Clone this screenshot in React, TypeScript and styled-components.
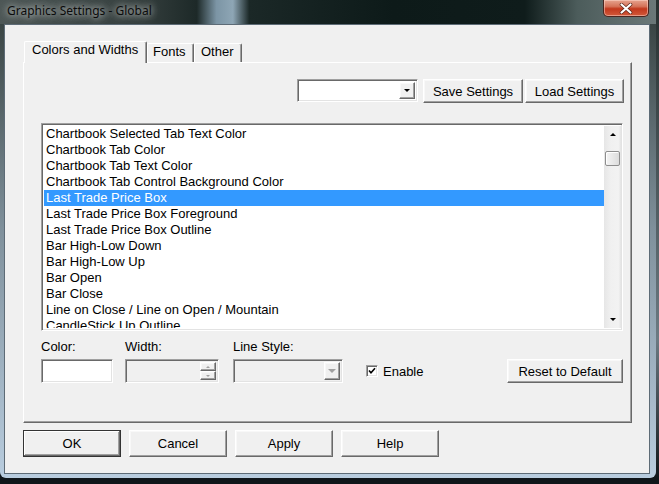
import * as React from 'react';
import { useState } from 'react';
import styled, { createGlobalStyle, css } from 'styled-components';

const GlobalStyle = createGlobalStyle`
  * {
    box-sizing: border-box;
  }
  html,
  body {
    margin: 0;
    padding: 0;
  }
  body {
    width: 659px;
    height: 484px;
    overflow: hidden;
    background: linear-gradient(180deg, #27302f 0%, #6c7a82 70%, #10161a 99%);
    font-family: 'Liberation Sans', Arial, sans-serif;
    font-size: 13px;
    color: #000;
  }
`;

const raised = css`
  border: 1px solid;
  border-color: #fff #696969 #696969 #fff;
  box-shadow: inset -1px -1px 0 #a0a0a0, inset 1px 1px 0 #f8f8f8;
`;

const sunken = css`
  border: 1px solid;
  border-color: #a0a0a0 #fff #fff #a0a0a0;
  box-shadow: inset 1px 1px 0 #696969, inset -1px -1px 0 #e3e3e3;
`;

const Window = styled.div`
  width: 656px;
  height: 478px;
  display: flex;
  flex-direction: column;
`;

const TitleBar = styled.div`
  height: 24px;
  display: flex;
  align-items: flex-start;
  padding-left: 7px;
  background: linear-gradient(
    90deg,
    #4d5756 0%,
    #333d3c 22%,
    #1d2928 30%,
    #7c95a5 33%,
    #8ea6b5 35.5%,
    #1b2827 38%,
    #0d1a19 60%,
    #0f1c1b 80%,
    #4c5c5b 88%,
    #6b7878 100%
  );
`;

const Title = styled.span`
  margin-top: 2px;
  font-family: 'Noto Sans', 'Open Sans', sans-serif;
  font-size: 12px;
  color: #0b0b0b;
  text-shadow: 0 0 6px rgba(225, 230, 230, 0.95), 0 0 12px rgba(205, 210, 210, 0.8);
`;

const CloseButton = styled.div`
  margin-left: auto;
  margin-right: 7px;
  width: 46px;
  height: 17px;
  display: flex;
  align-items: center;
  justify-content: center;
  border: 1px solid #4a2620;
  border-top: none;
  border-radius: 0 0 5px 5px;
  background: linear-gradient(180deg, #e6a38f 0%, #d5735a 40%, #c2381d 55%, #d2593a 100%);
  box-shadow: inset 0 0 0 1px rgba(255, 220, 210, 0.5);
`;

const FrameBody = styled.div`
  flex: 1;
  display: flex;
  padding: 0 6px 4px 4px;
  border-radius: 0 0 6px 6px;
  background: linear-gradient(180deg, #3a4544 0%, #7f909b 45%, #b9cddf 100%);
`;

const Client = styled.div`
  flex: 1;
  display: flex;
  flex-direction: column;
  background: #f0f0f0;
  border: 1px solid #5d6b76;
  padding: 16px 0 0 18px;
`;

const TabStrip = styled.div`
  height: 21px;
  display: flex;
  align-items: flex-end;
  padding-left: 1px;
`;

const Tab = styled.div<{ $active?: boolean; $w: number; $pl: number }>`
  position: relative;
  width: ${(p) => p.$w}px;
  height: ${(p) => (p.$active ? 22 : 19)}px;
  margin-bottom: ${(p) => (p.$active ? -1 : 0)}px;
  z-index: ${(p) => (p.$active ? 2 : 0)};
  padding-left: ${(p) => p.$pl}px;
  line-height: 16px;
  background: #f0f0f0;
  border: 1px solid;
  border-bottom: none;
  border-color: #fff #696969 #696969 #fff;
  border-radius: 2px 2px 0 0;
  box-shadow: inset -1px 0 0 #a0a0a0;
  white-space: nowrap;
`;

const Panel = styled.div`
  position: relative;
  z-index: 1;
  width: 609px;
  height: 361px;
  display: flex;
  flex-direction: column;
  border: 1px solid;
  border-color: #fff #696969 #696969 #fff;
  box-shadow: inset -1px -1px 0 #a0a0a0;
`;

const TopRow = styled.div`
  display: flex;
  justify-content: flex-end;
  align-items: flex-start;
  gap: 2px;
  margin-top: 16px;
  padding-right: 7px;
`;

const Combo = styled.div<{ $w: number; $disabled?: boolean }>`
  ${sunken};
  width: ${(p) => p.$w}px;
  height: ${(p) => (p.$disabled ? 24 : 23)}px;
  display: flex;
  justify-content: flex-end;
  padding: 2px;
  background: ${(p) => (p.$disabled ? '#f0f0f0' : '#fff')};
`;

const DropButton = styled.div`
  ${raised};
  width: 16px;
  height: 100%;
  display: flex;
  align-items: center;
  justify-content: center;
  background: #f0f0f0;
`;

const Arrow = styled.span<{ $up?: boolean; $color?: string; $size?: number }>`
  width: 0;
  height: 0;
  border-left: ${(p) => p.$size ?? 4}px solid transparent;
  border-right: ${(p) => p.$size ?? 4}px solid transparent;
  ${(p) =>
    p.$up
      ? `border-bottom: ${p.$size ?? 4}px solid ${p.$color ?? '#000'};`
      : `border-top: ${p.$size ?? 4}px solid ${p.$color ?? '#000'};`}
`;

const Button = styled.button<{ $w: number; $h?: number; $default?: boolean }>`
  ${raised};
  width: ${(p) => p.$w}px;
  height: ${(p) => p.$h ?? 24}px;
  padding: 0;
  background: #f0f0f0;
  font-family: 'Liberation Sans', Arial, sans-serif;
  font-size: 13px;
  color: #000;
  ${(p) =>
    p.$default &&
    css`
      border-color: #333;
      box-shadow: inset -1px -1px 0 #696969, inset 1px 1px 0 #fff, inset -2px -2px 0 #a0a0a0;
    `}
`;

const ListBox = styled.div`
  ${sunken};
  margin: 20px 8px 0 17px;
  height: 208px;
  display: flex;
  background: #fff;
  padding: 2px 1px 2px 2px;
  overflow: hidden;
`;

const Rows = styled.div`
  flex: 1;
  overflow: hidden;
`;

const Row = styled.div<{ $selected?: boolean }>`
  height: 16px;
  line-height: 16px;
  padding-left: 2px;
  white-space: nowrap;
  background: ${(p) => (p.$selected ? '#3399ff' : 'transparent')};
  color: ${(p) => (p.$selected ? '#fff' : '#000')};
`;

const ScrollBar = styled.div`
  width: 17px;
  display: flex;
  flex-direction: column;
  background: linear-gradient(90deg, #e6e6e6 0%, #f0f0f0 40%, #f2f2f2 85%, #e4e4e4 100%);
`;

const ScrollArrow = styled.div`
  height: 17px;
  display: flex;
  align-items: center;
  justify-content: center;
`;

const Track = styled.div`
  flex: 1;
  padding: 8px 1px 0 1px;
`;

const Thumb = styled.div`
  height: 15px;
  border: 1px solid #8e8e8e;
  border-radius: 2px;
  background: linear-gradient(90deg, #f4f4f4 0%, #e9e9e9 50%, #dcdcdc 100%);
  box-shadow: inset 1px 1px 0 #fff;
`;

const ControlsRow = styled.div`
  display: flex;
  align-items: flex-end;
  margin-top: 8px;
  padding: 0 8px 0 17px;
`;

const Field = styled.div<{ $w: number; $ml: number }>`
  width: ${(p) => p.$w}px;
  margin-left: ${(p) => p.$ml}px;
  display: flex;
  flex-direction: column;
  gap: 4px;
`;

const Label = styled.div`
  height: 16px;
  line-height: 16px;
  color: #000;
`;

const ColorSwatch = styled.div`
  ${sunken};
  height: 24px;
  background: #fff;
`;

const SpinField = styled.div`
  ${sunken};
  height: 24px;
  display: flex;
  justify-content: flex-end;
  padding: 2px;
  background: #f0f0f0;
`;

const Spinner = styled.div`
  width: 16px;
  display: flex;
  flex-direction: column;
`;

const SpinButton = styled.div`
  ${raised};
  flex: 1;
  display: flex;
  align-items: center;
  justify-content: center;
  background: #f0f0f0;
`;

const CheckWrap = styled.label`
  height: 24px;
  margin-left: 23px;
  display: flex;
  align-items: center;
  gap: 5px;
`;

const CheckBox = styled.span`
  ${sunken};
  width: 12px;
  height: 12px;
  display: flex;
  align-items: center;
  justify-content: center;
  background: #fff;
`;

const RightButton = styled.div`
  margin-left: auto;
`;

const BottomRow = styled.div`
  display: flex;
  gap: 8px;
  margin-top: 7px;
`;

const items = [
  'Chartbook Selected Tab Text Color',
  'Chartbook Tab Color',
  'Chartbook Tab Text Color',
  'Chartbook Tab Control Background Color',
  'Last Trade Price Box',
  'Last Trade Price Box Foreground',
  'Last Trade Price Box Outline',
  'Bar High-Low Down',
  'Bar High-Low Up',
  'Bar Open',
  'Bar Close',
  'Line on Close / Line on Open / Mountain',
  'CandleStick Up Outline',
];

function App() {
  const [selected, setSelected] = useState(4);
  const [enabled, setEnabled] = useState(true);

  return (
    <>
      <GlobalStyle />
      <Window>
        <TitleBar>
          <Title>Graphics Settings - Global</Title>
          <CloseButton>
            <svg width='14' height='11' viewBox='0 0 14 11'>
              <path d='M2.5 1.5 L11.5 9.5 M11.5 1.5 L2.5 9.5' stroke='#5a2418' strokeWidth='3.6' strokeLinecap='round' />
              <path d='M2.5 1.5 L11.5 9.5 M11.5 1.5 L2.5 9.5' stroke='#fff' strokeWidth='2.2' strokeLinecap='round' />
            </svg>
          </CloseButton>
        </TitleBar>
        <FrameBody>
          <Client>
            <TabStrip>
              <Tab $active $w={123} $pl={7}>Colors and Widths</Tab>
              <Tab $w={47} $pl={5}>Fonts</Tab>
              <Tab $w={48} $pl={6}>Other</Tab>
            </TabStrip>
            <Panel>
              <TopRow>
                <Combo $w={121} style={{ marginRight: 3 }}>
                  <DropButton>
                    <Arrow $size={3} />
                  </DropButton>
                </Combo>
                <Button $w={100}>Save Settings</Button>
                <Button $w={99}>Load Settings</Button>
              </TopRow>

              <ListBox>
                <Rows>
                  {items.map((item, i) => (
                    <Row key={item} $selected={i === selected} onClick={() => setSelected(i)}>
                      {item}
                    </Row>
                  ))}
                </Rows>
                <ScrollBar>
                  <ScrollArrow>
                    <Arrow $up $size={3} />
                  </ScrollArrow>
                  <Track>
                    <Thumb />
                  </Track>
                  <ScrollArrow>
                    <Arrow $size={3} />
                  </ScrollArrow>
                </ScrollBar>
              </ListBox>

              <ControlsRow>
                <Field $w={72} $ml={0}>
                  <Label>Color:</Label>
                  <ColorSwatch />
                </Field>
                <Field $w={94} $ml={12}>
                  <Label>Width:</Label>
                  <SpinField>
                    <Spinner>
                      <SpinButton>
                        <Arrow $up $size={2} $color='#a0a0a0' />
                      </SpinButton>
                      <SpinButton>
                        <Arrow $size={2} $color='#a0a0a0' />
                      </SpinButton>
                    </Spinner>
                  </SpinField>
                </Field>
                <Field $w={110} $ml={14}>
                  <Label>Line Style:</Label>
                  <Combo $w={110} $disabled>
                    <DropButton>
                      <Arrow $size={4} $color='#a0a0a0' />
                    </DropButton>
                  </Combo>
                </Field>
                <CheckWrap onClick={() => setEnabled(!enabled)}>
                  <CheckBox>
                    {enabled && (
                      <svg width='8' height='8' viewBox='0 0 8 8'>
                        <path d='M1 3.5 L3 5.8 L7 1.2' stroke='#000' strokeWidth='1.6' fill='none' />
                      </svg>
                    )}
                  </CheckBox>
                  Enable
                </CheckWrap>
                <RightButton>
                  <Button $w={116}>Reset to Default</Button>
                </RightButton>
              </ControlsRow>
            </Panel>

            <BottomRow>
              <Button $w={98} $h={27} $default>OK</Button>
              <Button $w={98} $h={27}>Cancel</Button>
              <Button $w={98} $h={27}>Apply</Button>
              <Button $w={98} $h={27}>Help</Button>
            </BottomRow>
          </Client>
        </FrameBody>
      </Window>
    </>
  );
}

export default App;
